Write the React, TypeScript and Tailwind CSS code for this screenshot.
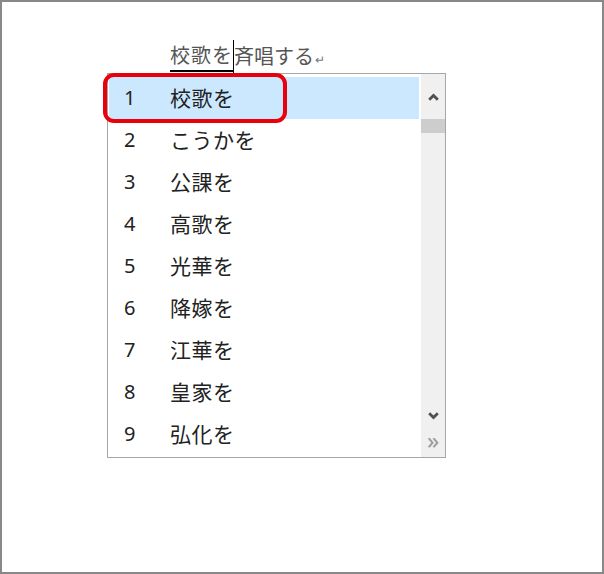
import React from "react";

const CANDIDATES = ["校歌を", "こうかを", "公課を", "高歌を", "光華を", "降嫁を", "江華を", "皇家を", "弘化を"];

const jp = { fontFamily: '"Noto Sans CJK JP", "Noto Sans", sans-serif' };
const num = { fontFamily: '"Noto Sans", "Liberation Sans", sans-serif' };

function Chevron({ up }: { up?: boolean }) {
  return (
    <svg width="11" height="8" viewBox="0 0 11 8">
      <path
        d={up ? "M1.2 6.8 L5.5 2.5 L9.8 6.8" : "M1.2 1.2 L5.5 5.5 L9.8 1.2"}
        fill="none"
        stroke="#505050"
        strokeWidth="2.8"
      />
    </svg>
  );
}

export default function App() {
  return (
    <div className="relative w-[604px] h-[574px] border-2 border-[#888888] bg-white overflow-hidden">
      {/* composing line */}
      <div className="ml-[168px] mt-[37px] flex items-center h-[34px] text-[20px] text-[#555555]" style={jp}>
        <span className="border-b-2 border-black leading-[30px] tracking-[1px]">校歌を</span>
        <span className="w-px h-[33px] bg-black" />
        <span className="leading-[30px]">斉唱する</span>
        <span className="text-[12px] text-[#777] ml-[1px] mt-[6px]">↵</span>
      </div>

      {/* candidate window */}
      <div className="ml-[105px] w-[339px] h-[385px] border border-[#a6a6a6] flex bg-white">
        <div className="w-[311px] pt-[3px] pl-px">
          {CANDIDATES.map((c, i) => (
            <div
              key={c}
              className={`h-[42px] flex items-center ${i === 0 ? "bg-[#cce8ff]" : ""}`}
            >
              <span className="w-[61px] pl-[15px] text-[20px] text-[#222]" style={num}>
                {i + 1}
              </span>
              <span className="text-[21px] text-[#222] tracking-[0.5px]" style={jp}>
                {c}
              </span>
            </div>
          ))}
        </div>
        <div className="ml-[2px] flex-1 bg-[#f0f0f0] flex flex-col items-center">
          <div className="h-[45px] flex items-center justify-center w-full">
            <Chevron up />
          </div>
          <div className="w-full h-[14px] bg-[#cdcdcd]" />
          <div className="flex-1" />
          <div className="h-[22px] flex items-center justify-center">
            <Chevron />
          </div>
          <div className="h-[30px] flex items-center justify-center text-[24px] text-[#9a9a9a] leading-none pb-[4px]" style={num}>
            »
          </div>
        </div>
      </div>

      {/* red highlight frame */}
      <div className="absolute left-[101px] top-[71px] w-[184px] h-[50px] border-[4px] border-[#e8000b] rounded-[11px]" />
    </div>
  );
}
